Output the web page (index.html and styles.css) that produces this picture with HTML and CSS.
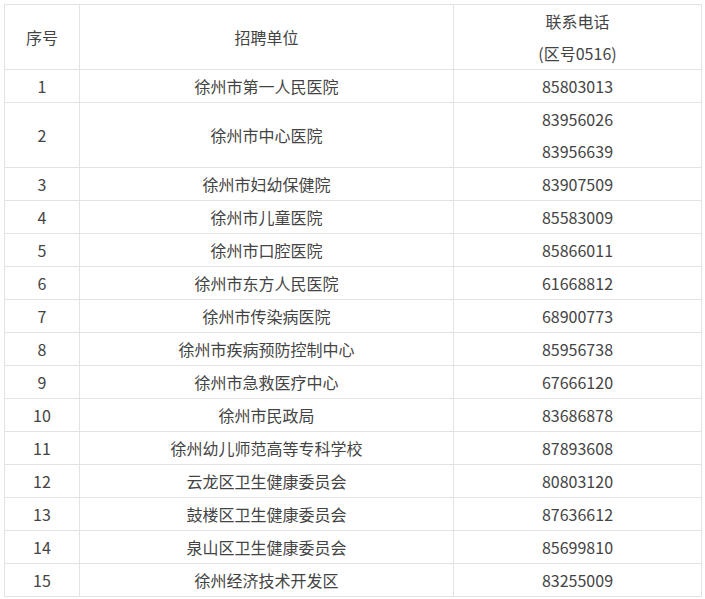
FILE: index.html
```html
<!DOCTYPE html>
<html lang="zh-CN">
<head>
<meta charset="utf-8">
<link rel="stylesheet" href="styles.css">
</head>
<body>
<table class="list">
  <colgroup>
    <col class="c-no">
    <col class="c-unit">
    <col class="c-tel">
  </colgroup>
  <thead>
    <tr><th>序号</th><th>招聘单位</th><th>联系电话<br>(区号0516)</th></tr>
  </thead>
  <tbody>
    <tr><td>1</td><td>徐州市第一人民医院</td><td>85803013</td></tr>
    <tr><td>2</td><td>徐州市中心医院</td><td>83956026<br>83956639</td></tr>
    <tr><td>3</td><td>徐州市妇幼保健院</td><td>83907509</td></tr>
    <tr><td>4</td><td>徐州市儿童医院</td><td>85583009</td></tr>
    <tr><td>5</td><td>徐州市口腔医院</td><td>85866011</td></tr>
    <tr><td>6</td><td>徐州市东方人民医院</td><td>61668812</td></tr>
    <tr><td>7</td><td>徐州市传染病医院</td><td>68900773</td></tr>
    <tr><td>8</td><td>徐州市疾病预防控制中心</td><td>85956738</td></tr>
    <tr><td>9</td><td>徐州市急救医疗中心</td><td>67666120</td></tr>
    <tr><td>10</td><td>徐州市民政局</td><td>83686878</td></tr>
    <tr><td>11</td><td>徐州幼儿师范高等专科学校</td><td>87893608</td></tr>
    <tr><td>12</td><td>云龙区卫生健康委员会</td><td>80803120</td></tr>
    <tr><td>13</td><td>鼓楼区卫生健康委员会</td><td>87636612</td></tr>
    <tr><td>14</td><td>泉山区卫生健康委员会</td><td>85699810</td></tr>
    <tr><td>15</td><td>徐州经济技术开发区</td><td>83255009</td></tr>
  </tbody>
</table>
</body>
</html>
```
FILE: styles.css
```css
html, body {
  margin: 0;
  padding: 0;
  background: #fff;
}
body {
  padding: 4px 0 0 4px;
  font-family: "Noto Sans CJK SC", "Noto Sans", sans-serif;
  font-size: 16px;
  color: #444;
}
.list {
  border-collapse: collapse;
  table-layout: fixed;
  width: 697px;
}
.c-no { width: 75px; }
.c-unit { width: 374px; }
.c-tel { width: 248px; }
.list th,
.list td {
  border: 1px solid #e3e3e3;
  padding: 0;
  text-align: center;
  vertical-align: middle;
  font-weight: normal;
  line-height: 32px;
  height: 32px;
}
```
